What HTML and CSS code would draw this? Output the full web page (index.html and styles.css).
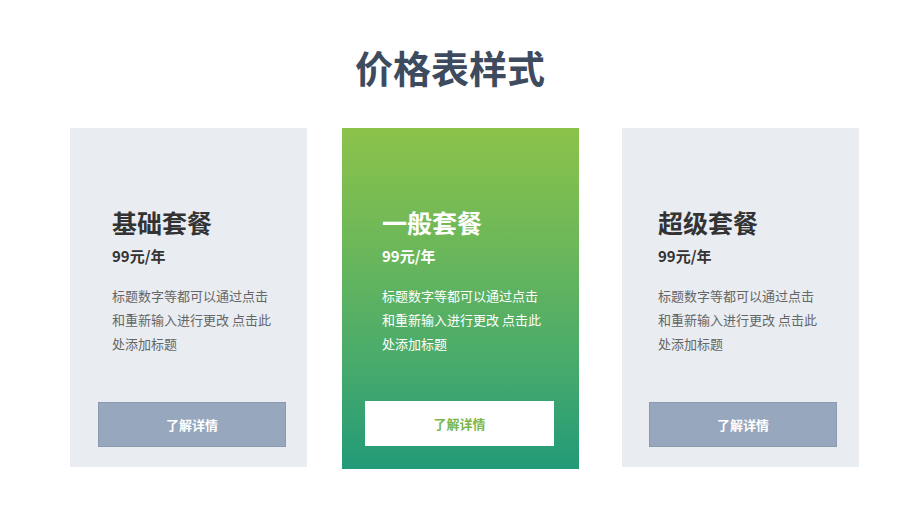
FILE: index.html
```html
<!DOCTYPE html>
<html lang="zh">
<head>
<meta charset="utf-8">
<title>价格表样式</title>
<link rel="stylesheet" href="styles.css">
</head>
<body>
<div class="page">
  <h1 class="title">价格表样式</h1>
  <div class="plans">
    <div class="card card-a">
      <h2 class="name">基础套餐</h2>
      <div class="price">99元/年</div>
      <p class="desc">标题数字等都可以通过点击<br>和重新输入进行更改 点击此<br>处添加标题</p>
      <div class="btn">了解详情</div>
    </div>
    <div class="card card-b featured">
      <h2 class="name">一般套餐</h2>
      <div class="price">99元/年</div>
      <p class="desc">标题数字等都可以通过点击<br>和重新输入进行更改 点击此<br>处添加标题</p>
      <div class="btn">了解详情</div>
    </div>
    <div class="card card-c">
      <h2 class="name">超级套餐</h2>
      <div class="price">99元/年</div>
      <p class="desc">标题数字等都可以通过点击<br>和重新输入进行更改 点击此<br>处添加标题</p>
      <div class="btn">了解详情</div>
    </div>
  </div>
</div>
</body>
</html>
```
FILE: styles.css
```css
* { box-sizing: border-box; }
html, body {
  margin: 0;
  padding: 0;
  background: #ffffff;
  width: 900px;
  height: 506px;
  overflow: hidden;
}
body {
  font-family: "Noto Sans CJK SC", "Noto Sans", sans-serif;
  color: #333;
}
.page {
  padding-top: 47px;
}
.title {
  margin: 0;
  height: 40px;
  line-height: 40px;
  font-size: 38px;
  font-weight: 700;
  text-align: center;
  color: #3e4b5e;
  letter-spacing: 0;
}
.plans {
  margin-top: 41px;
  padding-left: 70px;
  display: flex;
  align-items: flex-start;
  gap: 35px;
}
.card {
  width: 237px;
  height: 339px;
  background: #e9edf2;
  display: flex;
  flex-direction: column;
  padding: 82px 20px 20px 42px;
}
.card-b {
  height: 341px;
  padding-left: 40px;
  padding-bottom: 23px;
}
.card-c {
  margin-left: 8px;
  padding-left: 36px;
}
.featured {
  background: linear-gradient(180deg, #8bc24a 0%, #6cb75a 35%, #47aa6c 70%, #229a78 100%);
  color: #fff;
}
.name {
  margin: 0;
  font-size: 25px;
  line-height: 25px;
  height: 25px;
  font-weight: 700;
  color: #333;
}
.price {
  margin-top: 11px;
  font-size: 15px;
  line-height: 20px;
  font-weight: 700;
  color: #333;
}
.desc {
  margin: 18px 0 0;
  font-size: 13px;
  line-height: 24px;
  color: #666;
  white-space: nowrap;
}
.featured .name,
.featured .price,
.featured .desc {
  color: #fff;
}
.btn {
  margin-top: auto;
  width: 188px;
  height: 45px;
  line-height: 44px;
  margin-left: -14px;
  background: #97a7bd;
  border: 1px solid #8a9ab0;
  color: #fff;
  font-size: 13px;
  font-weight: 700;
  text-align: center;
}
.card-b .btn {
  margin-left: -17px;
  width: 189px;
  background: #ffffff;
  border-color: #ffffff;
  color: #7ab648;
}
.card-c .btn {
  margin-left: -9px;
}
```
